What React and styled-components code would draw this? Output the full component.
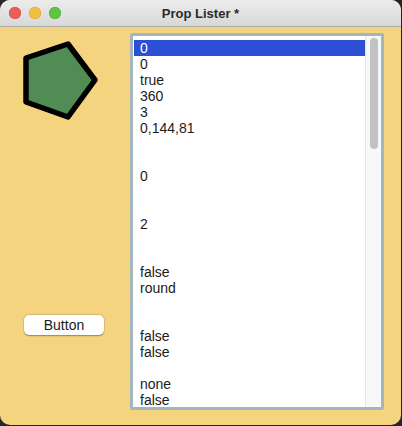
import React from "react";
import styled, { createGlobalStyle } from "styled-components";

const Global = createGlobalStyle`
  html, body { margin: 0; padding: 0; background: #262626; }
  body { font-family: "Liberation Sans", Arial, sans-serif; }
`;

const Window = styled.div`
  width: 401px;
  height: 425px;
  border-radius: 10px;
  overflow: hidden;
  background: #f4d47f;
  display: flex;
  flex-direction: column;
`;

const TitleBar = styled.div`
  height: 26px;
  flex: none;
  background: linear-gradient(#ececec, #d8d8d8);
  border-bottom: 1px solid #aeaeae;
  display: flex;
  align-items: center;
  position: relative;
`;

const Lights = styled.div`
  display: flex;
  gap: 8px;
  padding-left: 9px;
`;

const Light = styled.span`
  width: 12px;
  height: 12px;
  border-radius: 50%;
  background: ${(p) => p.$c};
  box-shadow: inset 0 0 0 0.5px ${(p) => p.$b};
`;

const Title = styled.div`
  position: absolute;
  left: 0;
  right: 0;
  text-align: center;
  font-weight: bold;
  font-size: 13px;
  color: #2b2b2b;
  pointer-events: none;
`;

const Body = styled.div`
  flex: 1;
  display: flex;
  padding: 6px 0 0 0;
`;

const LeftCol = styled.div`
  width: 130px;
  display: flex;
  flex-direction: column;
  align-items: flex-start;
`;

const Shape = styled.svg`
  margin: 5px 0 0 20px;
  display: block;
`;

const Btn = styled.button`
  margin: 187px 0 0 24px;
  width: 80px;
  height: 20px;
  border: none;
  border-radius: 5px;
  background: #ffffff;
  box-shadow: 0 0.5px 1.5px rgba(0, 0, 0, 0.35), 0 0 0 0.5px rgba(0, 0, 0, 0.1);
  font-family: "Liberation Sans", Arial, sans-serif;
  font-size: 14px;
  color: #1a1a1a;
  padding: 0;
`;

const ListBox = styled.div`
  width: 248px;
  height: 371px;
  border: 3px solid #a3b6bd;
  border-radius: 2px;
  background: #ffffff;
  display: flex;
`;

const Rows = styled.div`
  flex: 1;
  padding: 4px 0 0 1px;
  overflow: hidden;
`;

const Row = styled.div`
  height: 16px;
  line-height: 16px;
  font-size: 14px;
  padding-left: 6px;
  color: ${(p) => (p.$sel ? "#ffffff" : "#1c1c1c")};
  background: ${(p) => (p.$sel ? "#2d4fd6" : "transparent")};
`;

const Track = styled.div`
  width: 15px;
  flex: none;
  background: #f8f8f8;
  border-left: 1px solid #e6e6e6;
  padding-top: 2px;
  display: flex;
  justify-content: center;
`;

const Thumb = styled.div`
  width: 8px;
  height: 111px;
  border-radius: 4px;
  background: #c2c2c2;
`;

const items = [
  "0", "0", "true", "360", "3", "0,144,81", "", "", "0", "", "", "2", "", "",
  "false", "round", "", "", "false", "false", "", "none", "false", "",
];

export default function App() {
  return (
    <>
      <Global />
      <Window>
        <TitleBar>
          <Lights>
            <Light $c="#ec5f56" $b="#d0473f" />
            <Light $c="#f4be3f" $b="#d79f2a" />
            <Light $c="#5fc43f" $b="#4ba631" />
          </Lights>
          <Title>Prop Lister *</Title>
        </TitleBar>
        <Body>
          <LeftCol>
            <Shape width="82" height="90" viewBox="20 37 82 90">
              <polygon
                points="68,43 95,79 68,116 26,101 26,57"
                fill="#518c55"
                stroke="#000"
                strokeWidth="5.5"
                strokeLinejoin="round"
              />
            </Shape>
            <Btn>Button</Btn>
          </LeftCol>
          <ListBox>
            <Rows>
              {items.map((t, i) => (
                <Row key={i} $sel={i === 0}>{t || "\u00a0"}</Row>
              ))}
            </Rows>
            <Track>
              <Thumb />
            </Track>
          </ListBox>
        </Body>
      </Window>
    </>
  );
}
